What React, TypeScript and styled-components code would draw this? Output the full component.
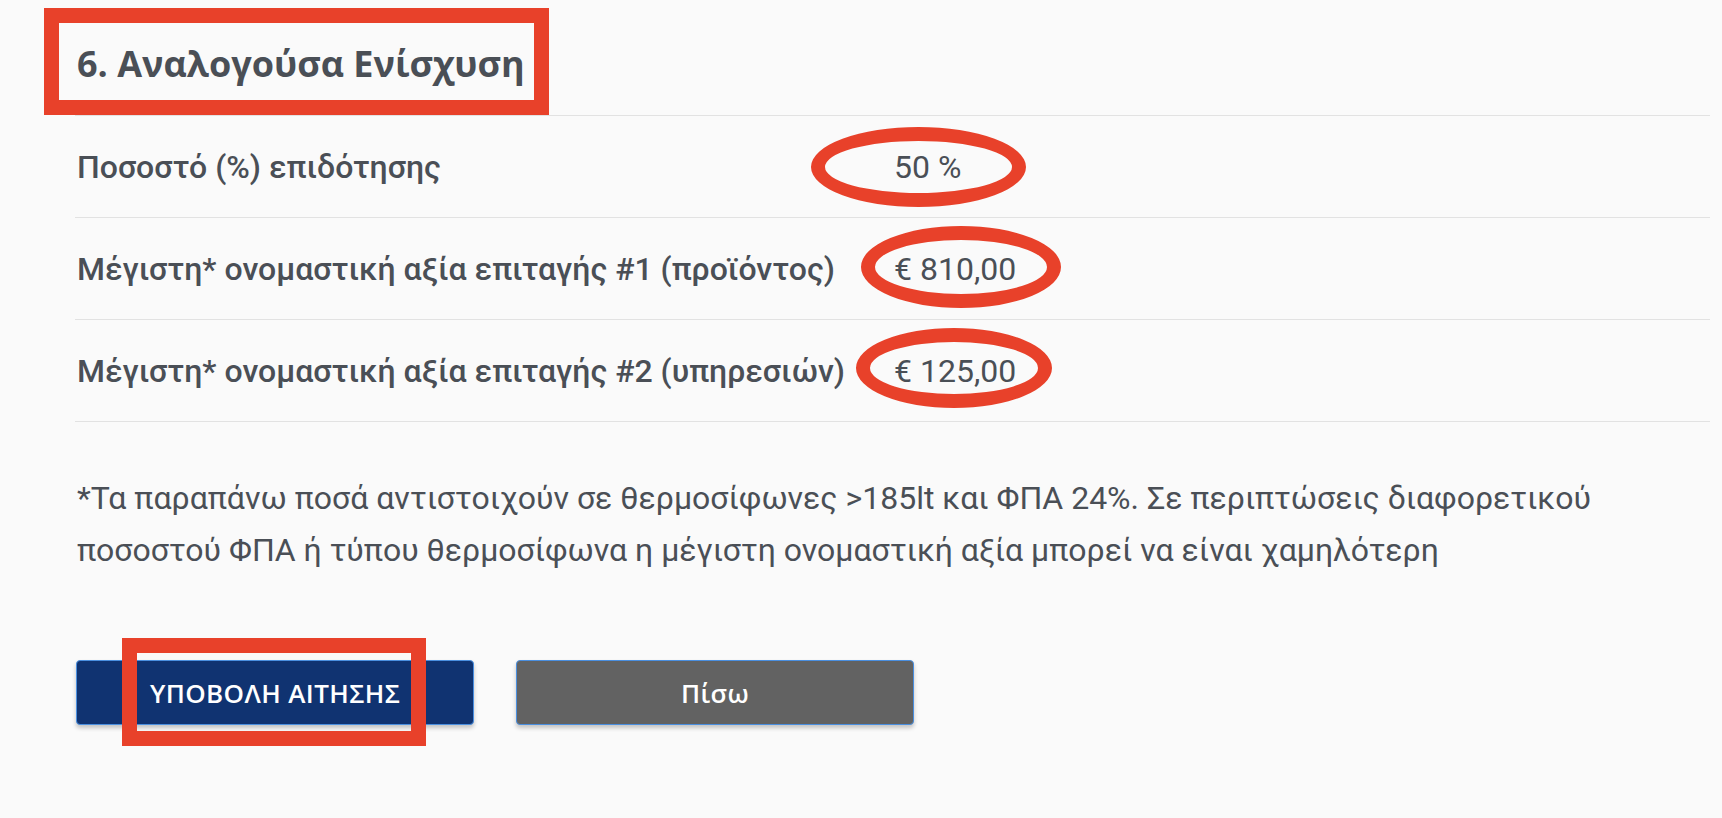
import React from "react";
import styled, { createGlobalStyle } from "styled-components";

const GlobalStyle = createGlobalStyle`
  html, body {
    margin: 0;
    padding: 0;
    background: #fafafa;
  }
  body {
    font-family: Roboto, "Noto Sans", sans-serif;
    color: #4a4f56;
  }
`;

const ANNOT = "#e8412a";

const Page = styled.div`
  width: 1722px;
  height: 818px;
  box-sizing: border-box;
  padding: 0 12px 0 75px;
  background: #fafafa;
  overflow: hidden;
`;

const HeadingBlock = styled.div`
  position: relative;
  height: 116px;
  box-sizing: border-box;
  border-bottom: 1px solid #e2e2e2;
  display: flex;
  align-items: flex-start;
`;

const Heading = styled.h2`
  margin: 0;
  padding-top: 44px;
  padding-left: 2px;
  font-family: "Open Sans", "Noto Sans", sans-serif;
  font-weight: 700;
  font-size: 36px;
  line-height: 39px;
  color: #4a4f56;
`;

const Annotation = styled.div<{ $l: number; $t: number; $w: number; $h: number }>`
  position: absolute;
  left: ${(p) => p.$l}px;
  top: ${(p) => p.$t}px;
  width: ${(p) => p.$w}px;
  height: ${(p) => p.$h}px;
  box-sizing: border-box;
  border: 15px solid ${ANNOT};
  pointer-events: none;
`;

const Ellipse = styled(Annotation)`
  border-width: 14px;
  border-radius: 50%;
`;

const Table = styled.div`
  display: flex;
  flex-direction: column;
`;

const Row = styled.div`
  display: grid;
  grid-template-columns: 818px 1fr;
  align-items: center;
  height: 102px;
  box-sizing: border-box;
  border-bottom: 1px solid #e2e2e2;
`;

const Label = styled.div`
  padding-left: 2px;
  font-family: Roboto, sans-serif;
  font-weight: 500;
  font-size: 32px;
  line-height: 36px;
  color: #4a4f56;
  white-space: nowrap;
`;

const Value = styled.div`
  position: relative;
  padding-left: 1px;
  font-family: Roboto, sans-serif;
  font-weight: 400;
  font-size: 32px;
  line-height: 36px;
  color: #4a4f56;
  white-space: nowrap;
`;

const Note = styled.p`
  margin: 50px 0 0 0;
  padding-left: 2px;
  font-family: Roboto, sans-serif;
  font-weight: 400;
  font-size: 32px;
  line-height: 52px;
  color: #4a4f56;
`;

const Actions = styled.div`
  display: flex;
  gap: 42px;
  margin-top: 84px;
  padding-left: 1px;
`;

const Button = styled.button<{ $variant: "primary" | "secondary" }>`
  position: relative;
  width: 398px;
  height: 65px;
  box-sizing: border-box;
  border: 1px solid #4a8fe0;
  border-radius: 4px;
  background: ${(p) => (p.$variant === "primary" ? "#103371" : "#626262")};
  box-shadow: 0 3px 4px rgba(0, 0, 0, 0.22);
  color: #ffffff;
  font-family: "Open Sans", "Noto Sans", sans-serif;
  font-weight: 600;
  font-size: 26px;
  letter-spacing: 0.4px;
  cursor: pointer;
  display: flex;
  align-items: center;
  justify-content: center;
  padding: 0;
`;

type RowData = {
  label: string;
  value: string;
  ell: { l: number; t: number; w: number; h: number };
};

const rows: RowData[] = [
  { label: "Ποσοστό (%) επιδότησης", value: "50 %", ell: { l: -82, t: -22, w: 215, h: 80 } },
  {
    label: "Μέγιστη* ονομαστική αξία επιταγής #1 (προϊόντος)",
    value: "€ 810,00",
    ell: { l: -32, t: -25, w: 200, h: 82 },
  },
  {
    label: "Μέγιστη* ονομαστική αξία επιταγής #2 (υπηρεσιών)",
    value: "€ 125,00",
    ell: { l: -37, t: -25, w: 196, h: 80 },
  },
];

export default function App() {
  return (
    <Page>
      <GlobalStyle />
      <HeadingBlock>
        <Heading>6. Αναλογούσα Ενίσχυση</Heading>
        <Annotation $l={-31} $t={8} $w={505} $h={107} />
      </HeadingBlock>
      <Table>
        {rows.map((r) => (
          <Row key={r.label}>
            <Label>{r.label}</Label>
            <Value>
              {r.value}
              <Ellipse $l={r.ell.l} $t={r.ell.t} $w={r.ell.w} $h={r.ell.h} />
            </Value>
          </Row>
        ))}
      </Table>
      <Note>
        *Τα παραπάνω ποσά αντιστοιχούν σε θερμοσίφωνες &gt;185lt και ΦΠΑ 24%. Σε περιπτώσεις
        διαφορετικού ποσοστού ΦΠΑ ή τύπου θερμοσίφωνα η μέγιστη ονομαστική αξία μπορεί να είναι
        χαμηλότερη
      </Note>
      <Actions>
        <Button $variant="primary">
          ΥΠΟΒΟΛΗ ΑΙΤΗΣΗΣ
          <Annotation $l={45} $t={-23} $w={304} $h={108} />
        </Button>
        <Button $variant="secondary">Πίσω</Button>
      </Actions>
    </Page>
  );
}
